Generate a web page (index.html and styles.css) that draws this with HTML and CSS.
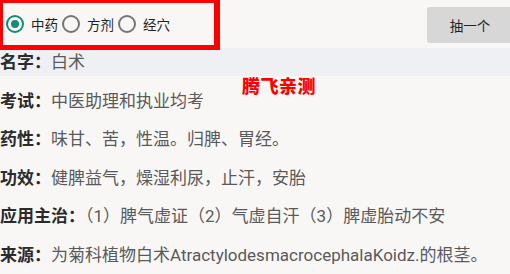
FILE: index.html
```html
<!DOCTYPE html>
<html lang="zh">
<head>
<meta charset="utf-8">
<link rel="stylesheet" href="styles.css">
</head>
<body>
<div class="page">
  <div class="topbar">
    <div class="radios">
      <label class="radio checked"><span class="dot"></span><span class="rtext">中药</span></label>
      <label class="radio"><span class="dot"></span><span class="rtext">方剂</span></label>
      <label class="radio"><span class="dot"></span><span class="rtext">经穴</span></label>
    </div>
    <div class="btn">抽一个</div>
  </div>
  <div class="row name"><b>名字：</b><span>白术</span></div>
  <div class="row"><b>考试：</b><span>中医助理和执业均考</span></div>
  <div class="row"><b>药性：</b><span>味甘、苦，性温。归脾、胃经。</span></div>
  <div class="row"><b>功效：</b><span>健脾益气，燥湿利尿，止汗，安胎</span></div>
  <div class="row"><b>应用主治：</b><span>（1）脾气虚证（2）气虚自汗（3）脾虚胎动不安</span></div>
  <div class="row"><b>来源：</b><span>为菊科植物白术AtractylodesmacrocephalaKoidz.的根茎。</span></div>
  <div class="watermark">腾飞亲测</div>
</div>
</body>
</html>
```
FILE: styles.css
```css
html, body {
  margin: 0;
  padding: 0;
  background: #f9f7f6;
}
.page {
  position: relative;
  width: 510px;
  height: 274px;
  overflow: hidden;
  font-family: Roboto, "Noto Sans CJK SC", sans-serif;
}
.topbar {
  display: flex;
  align-items: flex-start;
  justify-content: space-between;
  height: 48px;
}
.radios {
  box-sizing: border-box;
  width: 220px;
  height: 50px;
  border-style: solid;
  border-color: #ff0000;
  border-width: 3px 6px 5px 3px;
  display: flex;
  align-items: center;
  padding-left: 3px;
  position: relative;
  z-index: 2;
}
.radio {
  display: flex;
  align-items: center;
  gap: 7px;
  margin-right: 5px;
  font-size: 13.5px;
  color: #222;
}
.dot {
  box-sizing: border-box;
  width: 18px;
  height: 18px;
  border-radius: 50%;
  border: 2px solid #757575;
  display: flex;
  align-items: center;
  justify-content: center;
}
.checked .dot {
  border-color: #168a7b;
}
.checked .dot::after {
  content: "";
  width: 8px;
  height: 8px;
  border-radius: 50%;
  background: #168a7b;
}
.rtext {
  width: 26px;
  white-space: nowrap;
}
.btn {
  margin-top: 7px;
  margin-right: -3px;
  width: 86px;
  height: 36px;
  background: #d7d7d7;
  border-radius: 3px;
  display: flex;
  align-items: center;
  justify-content: center;
  font-size: 13.5px;
  color: #222;
}
.row {
  height: 28px;
  line-height: 28px;
  margin-top: 10.5px;
  font-size: 17px;
  white-space: nowrap;
  color: #5a5a5a;
}
.row b {
  color: #2b2b2b;
  font-weight: 700;
}
.row.name {
  margin-top: 0;
  background: #eef0f3;
}
.watermark {
  position: absolute;
  left: 242px;
  top: 73px;
  font-size: 18px;
  font-weight: 900;
  color: #ff0000;
  font-family: "Noto Sans CJK SC", sans-serif;
  letter-spacing: 0.5px;
  line-height: 24px;
}
```
